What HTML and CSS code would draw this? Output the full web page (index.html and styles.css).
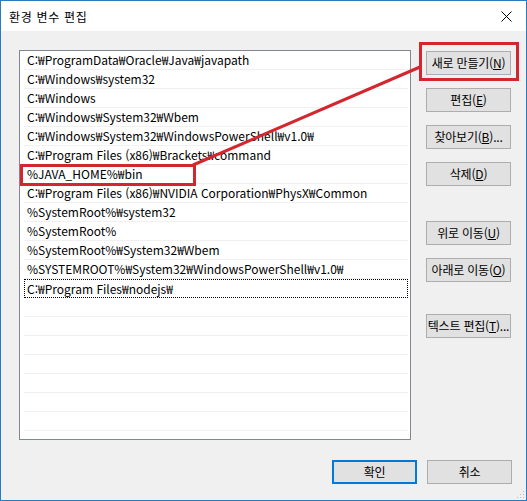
FILE: index.html
```html
<!DOCTYPE html>
<html lang="ko">
<head>
<meta charset="utf-8">
<title>환경 변수 편집</title>
<link rel="stylesheet" href="styles.css">
</head>
<body>
<div class="window">
  <div class="titlebar">
    <span class="title">환경 변수 편집</span>
    <svg class="close" width="11" height="11" viewBox="0 0 11 11"><path d="M0.5 0.5 L10.5 10.5 M10.5 0.5 L0.5 10.5" stroke="#000" stroke-width="1" fill="none"/></svg>
  </div>
  <div class="content">
    <div class="main">
      <div class="listbox">
        <div class="row">C:₩ProgramData₩Oracle₩Java₩javapath</div>
        <div class="row">C:₩Windows₩system32</div>
        <div class="row">C:₩Windows</div>
        <div class="row">C:₩Windows₩System32₩Wbem</div>
        <div class="row">C:₩Windows₩System32₩WindowsPowerShell₩v1.0₩</div>
        <div class="row">C:₩Program Files (x86)₩Brackets₩command</div>
        <div class="row">%JAVA_HOME%₩bin</div>
        <div class="row">C:₩Program Files (x86)₩NVIDIA Corporation₩PhysX₩Common</div>
        <div class="row">%SystemRoot%₩system32</div>
        <div class="row">%SystemRoot%</div>
        <div class="row">%SystemRoot%₩System32₩Wbem</div>
        <div class="row">%SYSTEMROOT%₩System32₩WindowsPowerShell₩v1.0₩</div>
        <div class="row focus">C:₩Program Files₩nodejs₩</div>
        <div class="row"></div>
        <div class="row"></div>
        <div class="row"></div>
        <div class="row"></div>
        <div class="row"></div>
        <div class="row"></div>
        <div class="row"></div>
      </div>
      <div class="side">
        <button class="btn">새로 만들기(<u>N</u>)</button>
        <button class="btn">편집(<u>E</u>)</button>
        <button class="btn">찾아보기(<u>B</u>)...</button>
        <button class="btn">삭제(<u>D</u>)</button>
        <button class="btn gap-a">위로 이동(<u>U</u>)</button>
        <button class="btn">아래로 이동(<u>O</u>)</button>
        <button class="btn gap-b">텍스트 편집(<u>T</u>)...</button>
      </div>
    </div>
    <div class="footer">
      <button class="btn default">확인</button>
      <button class="btn">취소</button>
    </div>
  </div>
  <div class="grip"></div>
  <div class="mark mark-new"></div>
  <div class="mark mark-java"></div>
  <svg class="arrow" width="527" height="501" viewBox="0 0 527 501"><line x1="193" y1="165" x2="420" y2="67" stroke="#d3262e" stroke-width="3"/></svg>
</div>
</body>
</html>
```

FILE: styles.css
```css
html, body {
  margin: 0;
  padding: 0;
  background: #f0f0f0;
}
body {
  font-family: "Noto Sans CJK KR", "Noto Sans", sans-serif;
  font-size: 12px;
  color: #000;
}
.window {
  position: relative;
  width: 527px;
  height: 501px;
  box-sizing: border-box;
  border: 1px solid #2b79bf;
  background: #f0f0f0;
  display: flex;
  flex-direction: column;
  overflow: hidden;
}
.titlebar {
  height: 30px;
  background: #fff;
  display: flex;
  align-items: center;
  justify-content: space-between;
  padding: 0 14px 0 8px;
  flex: none;
}
.title {
  font-size: 12px;
  line-height: 16px;
  margin-top: 1px;
  letter-spacing: 0.7px;
}
.close {
  display: block;
  margin-top: 1px;
}
.content {
  flex: 1;
  display: flex;
  flex-direction: column;
}
.main {
  display: flex;
  padding: 19px 0 0 18px;
}
.listbox {
  width: 392px;
  height: 390px;
  box-sizing: border-box;
  border: 1px solid #828790;
  background: #fff;
  padding: 0 2px 0 4px;
  overflow: hidden;
}
.row {
  height: 19px;
  box-sizing: border-box;
  border-bottom: 1px solid #f0f0f0;
  padding: 0 0 0 3px;
  line-height: 18px;
  white-space: nowrap;
  font-size: 12px;
}
.row.focus {
  border: 1px dotted #000;
  padding-left: 2px;
  line-height: 17px;
}
.side {
  display: flex;
  flex-direction: column;
  margin-left: 15px;
  padding-top: 1px;
  gap: 13px;
}
.btn {
  width: 85px;
  height: 24px;
  box-sizing: border-box;
  background: #e1e1e1;
  border: 1px solid #adadad;
  font-family: "Noto Sans CJK KR", "Noto Sans", sans-serif;
  font-size: 12px;
  color: #000;
  padding: 0;
  line-height: 20px;
  white-space: nowrap;
  letter-spacing: -0.2px;
}
.btn u {
  text-underline-offset: 1px;
}
.gap-a {
  margin-top: 22px;
}
.gap-b {
  margin-top: 19px;
}
.footer {
  display: flex;
  justify-content: flex-end;
  gap: 10px;
  padding: 20px 14px 0 0;
}
.btn.default {
  border: 2px solid #0078d7;
  line-height: 18px;
}
.grip {
  position: absolute;
  right: 2px;
  bottom: 2px;
  width: 8px;
  height: 8px;
  background:
    radial-gradient(circle, #bcbcbc 0.8px, transparent 1px) 0 0 / 3px 3px;
  clip-path: polygon(100% 0, 100% 100%, 0 100%);
}
.mark {
  position: absolute;
  border: 3px solid #d3262e;
  box-sizing: border-box;
}
.mark-new {
  left: 418px;
  top: 41px;
  width: 100px;
  height: 39px;
}
.mark-java {
  left: 19px;
  top: 163px;
  width: 176px;
  height: 22px;
}
.arrow {
  position: absolute;
  left: -1px;
  top: -1px;
  pointer-events: none;
}
```
